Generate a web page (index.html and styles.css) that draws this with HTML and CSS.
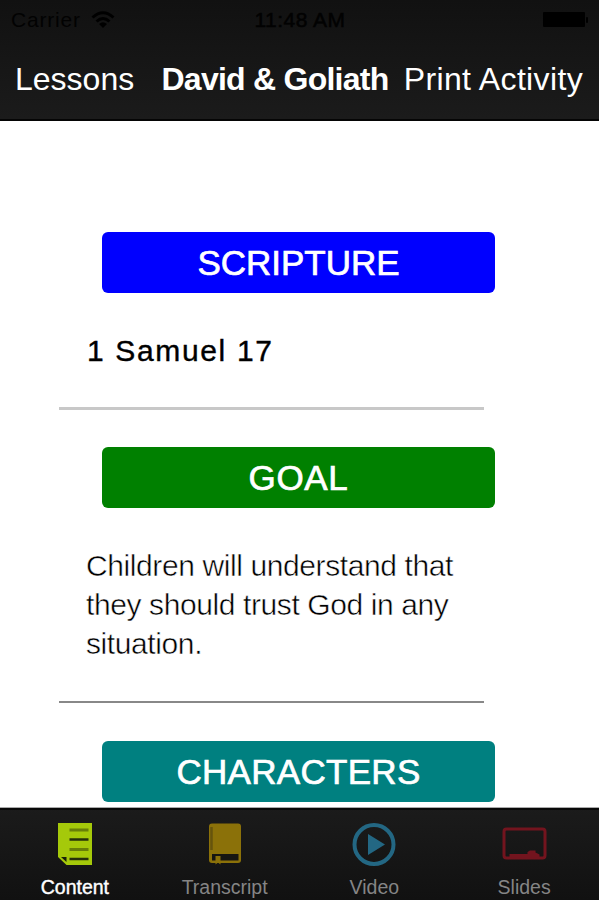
FILE: index.html
```html
<!DOCTYPE html>
<html lang="en">
<head>
    <meta charset="UTF-8">
    <meta name="viewport" content="width=device-width, initial-scale=1.0">
    <title>David &amp; Goliath</title>
    <link rel="stylesheet" href="styles.css">
</head>
<body>
    <header class="header">
        <div class="status-bar">
            <div class="carrier">
                <span>Carrier</span>
                <svg class="wifi" viewBox="0 0 24 18" width="24" height="18">
                    <path d="M1.5 6.5 Q12 -3 22.5 6.5" fill="none" stroke="#000" stroke-width="3"/>
                    <path d="M5.5 10.5 Q12 4.5 18.5 10.5" fill="none" stroke="#000" stroke-width="3"/>
                    <path d="M8 13 Q12 9.5 16 13 L12 17 Z" fill="#000"/>
                </svg>
            </div>
            <div class="time">11:48 AM</div>
            <svg class="battery" viewBox="0 0 46 16" width="46" height="16">
                <rect x="0" y="0" width="42" height="15" rx="1"/>
                <rect x="43" y="5" width="2" height="6" rx="1"/>
            </svg>
        </div>
        <nav class="nav-bar">
            <a class="nav-back">Lessons</a>
            <h1 class="nav-title">David &amp; Goliath</h1>
            <a class="nav-print">Print Activity</a>
        </nav>
    </header>

    <main class="content">
        <h2 class="label scripture">SCRIPTURE</h2>
        <p class="verse">1 Samuel 17</p>
        <hr class="line">
        <h2 class="label goal">GOAL</h2>
        <p class="text">Children will understand that<br>they should trust God in any<br>situation.</p>
        <hr class="line thin">
        <h2 class="label characters">CHARACTERS</h2>
    </main>

    <footer class="tab-bar">
        <a class="tab active">
            <svg viewBox="0 0 50 50" width="50" height="50">
                <path d="M8 4 H42 V46 H16.5 L8 38 Z" fill="#a5c90a"/>
                <path d="M19.5 11 H38.5 M19.5 30.5 H38.5" stroke="#687f08" stroke-width="3"/>
                <path d="M19.5 20.5 H38.5 M19.5 40 H38.5" stroke="#26300a" stroke-width="2.4"/>
                <path d="M11 38 H16.5 V43 Z" fill="#18200a"/>
            </svg>
            <span>Content</span>
        </a>
        <a class="tab">
            <svg viewBox="0 0 50 50" width="50" height="50">
                <rect x="9" y="4.5" width="32" height="39.5" rx="3" fill="#8b7109"/>
                <path d="M11.5 8 V31" stroke="#66540d" stroke-width="2.5"/>
                <path d="M12 35 H38.5 V41.5 H12 Z" fill="#161512"/>
                <path d="M15.5 37 H20.5 V45.5 L18 43.5 L15.5 45.5 Z" fill="#8b7109"/>
            </svg>
            <span>Transcript</span>
        </a>
        <a class="tab">
            <svg viewBox="0 0 50 50" width="50" height="50">
                <circle cx="25" cy="25.5" r="19.5" fill="none" stroke="#236783" stroke-width="4"/>
                <path d="M19 15 L36 25.5 L19 36 Z" fill="#236783"/>
            </svg>
            <span>Video</span>
        </a>
        <a class="tab">
            <svg viewBox="0 0 50 50" width="50" height="50">
                <rect x="5" y="10" width="41" height="29" rx="2.5" fill="none" stroke="#73141e" stroke-width="3"/>
                <path d="M10.5 38.5 V35 H28.5 V33 L31 31.5 H36.5 V33.5 L40.5 35.5 V38.5 Z" fill="#73141e"/>
            </svg>
            <span>Slides</span>
        </a>
    </footer>
</body>
</html>
```
FILE: styles.css
```css
* {
    box-sizing: border-box;
}

body {
    display: flex;
    flex-direction: column;
    height: 100vh;
    margin: 0;
    background-color: white;
    color: black;
    font-family: "Liberation Sans", Arial, sans-serif;
    overflow: hidden;
}

h1, h2, p {
    margin: 0;
    white-space: nowrap;
}

.header {
    flex: 0 0 121px;
    background: linear-gradient(#111111, #1b1b1b);
    border-bottom: 2px solid #050505;
}

.status-bar {
    display: grid;
    grid-template-columns: 1fr auto 1fr;
    align-items: center;
    height: 40px;
    padding: 0 10px 0 11px;
    color: #020202;
    font-size: 21px;
}

.carrier {
    display: flex;
    align-items: center;
    gap: 10px;
    letter-spacing: 0.8px;
}

.time {
    letter-spacing: 0.5px;
    -webkit-text-stroke: 0.5px #020202;
}

.battery {
    justify-self: end;
}

.nav-bar {
    display: flex;
    justify-content: space-between;
    align-items: center;
    height: 79px;
    padding: 0 16px 0 15px;
    color: white;
    font-size: 32px;
}

.nav-title {
    margin-left: 12px;
    font-size: 32px;
    letter-spacing: -0.75px;
}

.nav-print {
    letter-spacing: 0.35px;
}

.content {
    flex: 1;
    min-height: 0;
    padding: 111px 104px 0 102px;
    overflow: hidden;
}

.label {
    height: 61px;
    border-radius: 6px;
    color: white;
    font-size: 35px;
    font-weight: normal;
    line-height: 62px;
    text-align: center;
    letter-spacing: 0.3px;
    -webkit-text-stroke: 0.7px white;
}

.scripture {
    background-color: #0000ff;
    letter-spacing: 0;
}

.goal {
    background-color: #008000;
    letter-spacing: 0.7px;
}

.characters {
    background-color: #008080;
}

.verse {
    margin: 39px 0 0 -15px;
    font-size: 30px;
    line-height: 37px;
    letter-spacing: 1.65px;
    -webkit-text-stroke: 0.4px black;
}

.line {
    width: 425px;
    height: 3px;
    margin: 38px 0 37px -43px;
    border: none;
    background-color: #c8c8c8;
}

.text {
    margin: 38px 0 0 -16px;
    font-size: 30px;
    line-height: 39px;
    letter-spacing: -0.4px;
    -webkit-text-stroke: 0.5px white;
}

.line.thin {
    height: 2px;
    margin-bottom: 38px;
    background-color: #888888;
}

.tab-bar {
    display: flex;
    flex: 0 0 93px;
    border-top: 1px solid #aaaaaa;
    background: linear-gradient(#1b1b1b, #111111);
    box-shadow: inset 0 2px #080808;
}

.tab {
    display: flex;
    flex: 1;
    flex-direction: column;
    align-items: center;
    gap: 6px;
    padding-top: 11px;
    color: #858585;
    font-size: 19.5px;
    line-height: 24px;
}

.tab.active {
    color: white;
    -webkit-text-stroke: 0.4px white;
}

.tab svg {
    display: block;
    flex: none;
}
```
